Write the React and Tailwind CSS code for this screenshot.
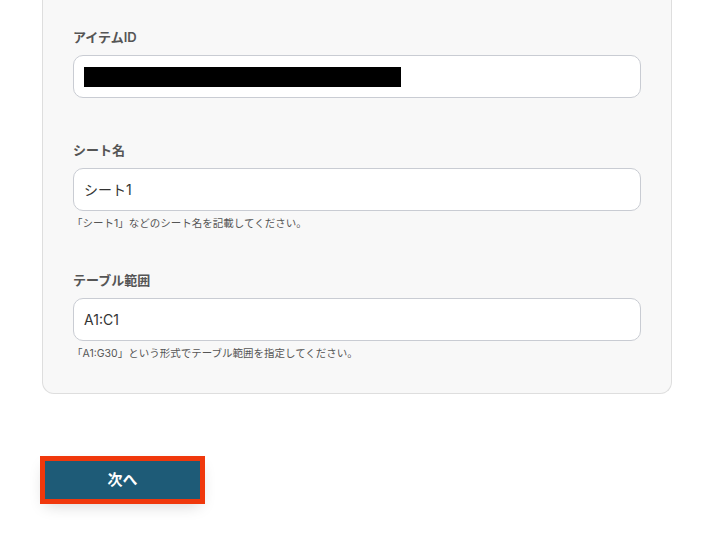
export default function App() {
  const font = { fontFamily: 'Inter, "Noto Sans CJK JP", "Noto Sans", sans-serif' };
  return (
    <div className="w-[706px] h-[544px] bg-white overflow-hidden" style={font}>
      <div className="ml-[42px] w-[630px] bg-[#f8f8f8] border-x border-b border-[#dedede] rounded-b-[12px] pt-[27px] pb-[32px] px-[30px]">
        <div className="text-[13px] leading-[20px] font-semibold text-[#555555]">アイテムID</div>
        <div className="mt-[8px] h-[43px] bg-white border border-[#c9ccd3] rounded-[10px] flex items-center pl-[10px]">
          <div className="w-[317px] h-[20px] bg-black" />
        </div>

        <div className="mt-[42px] text-[13px] leading-[20px] font-semibold text-[#555555]">シート名</div>
        <div className="mt-[8px] h-[43px] bg-white border border-[#c9ccd3] rounded-[10px] flex items-center pl-[10px] text-[14px] text-[#333333]">
          シート1
        </div>
        <div className="mt-[6px] text-[10.5px] leading-[14px] text-[#555555] -ml-[1px]">「シート1」などのシート名を記載してください。</div>

        <div className="mt-[39px] text-[13px] leading-[20px] font-semibold text-[#555555]">テーブル範囲</div>
        <div className="mt-[8px] h-[43px] bg-white border border-[#c9ccd3] rounded-[10px] flex items-center pl-[10px] text-[14px] text-[#333333]">
          A1:C1
        </div>
        <div className="mt-[6px] text-[10.5px] leading-[14px] text-[#555555] -ml-[1px]">「A1:G30」という形式でテーブル範囲を指定してください。</div>
      </div>

      <div className="ml-[45px] mt-[67px]">
        <button className="w-[155px] h-[38px] bg-[#1e5b77] text-white text-[15px] font-bold outline-solid outline-[5px] outline-[#f0380c] shadow-[0_6px_16px_rgba(0,0,0,0.18)]" style={font}>
          次へ
        </button>
      </div>
    </div>
  );
}
